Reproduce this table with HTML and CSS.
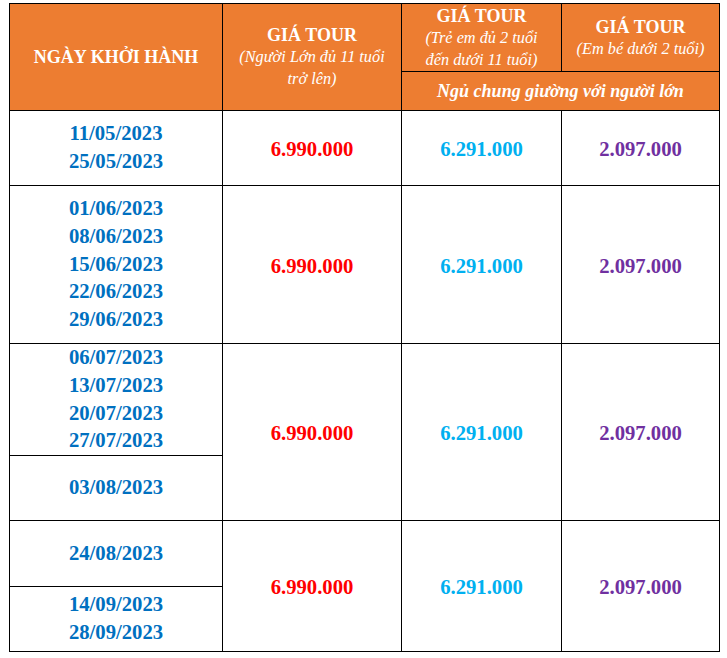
FILE: index.html
```html
<!DOCTYPE html>
<html lang="vi">
<head>
<meta charset="utf-8">
<title>Giá tour</title>
<link rel="stylesheet" href="styles.css">
</head>
<body>
<table class="tour">
  <colgroup>
    <col class="c1"><col class="c2"><col class="c3"><col class="c4">
  </colgroup>
  <thead>
    <tr class="h1">
      <th rowspan="2"><span class="title">NGÀY KHỞI HÀNH</span></th>
      <th rowspan="2" class="adult-head"><span class="title">GIÁ TOUR</span><span class="sub">(Người Lớn đủ 11 tuổi<br>trở lên)</span></th>
      <th><span class="title">GIÁ TOUR</span><span class="sub">(Trẻ em đủ 2 tuổi<br>đến dưới 11 tuổi)</span></th>
      <th class="baby-head"><span class="title">GIÁ TOUR</span><span class="sub">(Em bé dưới 2 tuổi)</span></th>
    </tr>
    <tr class="h2">
      <th colspan="2" class="note">Ngủ chung giường với người lớn</th>
    </tr>
  </thead>
  <tbody>
    <tr class="ra">
      <td class="date">11/05/2023<br>25/05/2023</td>
      <td class="price adult">6.990.000</td>
      <td class="price child">6.291.000</td>
      <td class="price baby">2.097.000</td>
    </tr>
    <tr class="rb">
      <td class="date">01/06/2023<br>08/06/2023<br>15/06/2023<br>22/06/2023<br>29/06/2023</td>
      <td class="price adult">6.990.000</td>
      <td class="price child">6.291.000</td>
      <td class="price baby">2.097.000</td>
    </tr>
    <tr class="rc1">
      <td class="date">06/07/2023<br>13/07/2023<br>20/07/2023<br>27/07/2023</td>
      <td class="price adult" rowspan="2">6.990.000</td>
      <td class="price child" rowspan="2">6.291.000</td>
      <td class="price baby" rowspan="2">2.097.000</td>
    </tr>
    <tr class="rc2">
      <td class="date">03/08/2023</td>
    </tr>
    <tr class="rd1">
      <td class="date">24/08/2023</td>
      <td class="price adult" rowspan="2">6.990.000</td>
      <td class="price child" rowspan="2">6.291.000</td>
      <td class="price baby" rowspan="2">2.097.000</td>
    </tr>
    <tr class="rd2">
      <td class="date">14/09/2023<br>28/09/2023</td>
    </tr>
  </tbody>
</table>
</body>
</html>
```
FILE: styles.css
```css
html, body {
  margin: 0;
  background: #ffffff;
}
body {
  padding: 3px 0 0 9px;
  font-family: "Liberation Serif", "Times New Roman", serif;
}
.tour {
  border-collapse: collapse;
  table-layout: fixed;
  width: 711px;
}
.c1 { width: 213px; }
.c2 { width: 179px; }
.c3 { width: 160px; }
.c4 { width: 158px; }
.tour th,
.tour td {
  border: 1px solid #000;
  padding: 0;
  text-align: center;
  vertical-align: middle;
}
.tour th {
  background: #ed7d31;
  color: #ffffff;
  font-weight: bold;
}
.title {
  display: block;
  font-size: 18px;
  line-height: 22px;
}
.sub {
  display: block;
  font-size: 16.3px;
  line-height: 22px;
  font-style: italic;
  font-weight: normal;
}
.adult-head { padding-bottom: 2px; }
.baby-head { padding-bottom: 2px; }
.note {
  font-size: 18px;
  font-style: italic;
  font-weight: bold;
}
.h1 { height: 68px; }
.h2 { height: 39px; }
.ra { height: 75px; }
.rb { height: 158px; }
.rc1 { height: 112px; }
.rc2 { height: 65px; }
.rd1 { height: 66px; }
.rd2 { height: 65px; }
.tour td {
  font-weight: bold;
  font-size: 20.7px;
  line-height: 27.8px;
}
.tour td.price { padding-top: 4px; }
.date { color: #0070c0; }
.adult { color: #ff0000; }
.child { color: #00b0f0; }
.baby { color: #7030a0; }
```
